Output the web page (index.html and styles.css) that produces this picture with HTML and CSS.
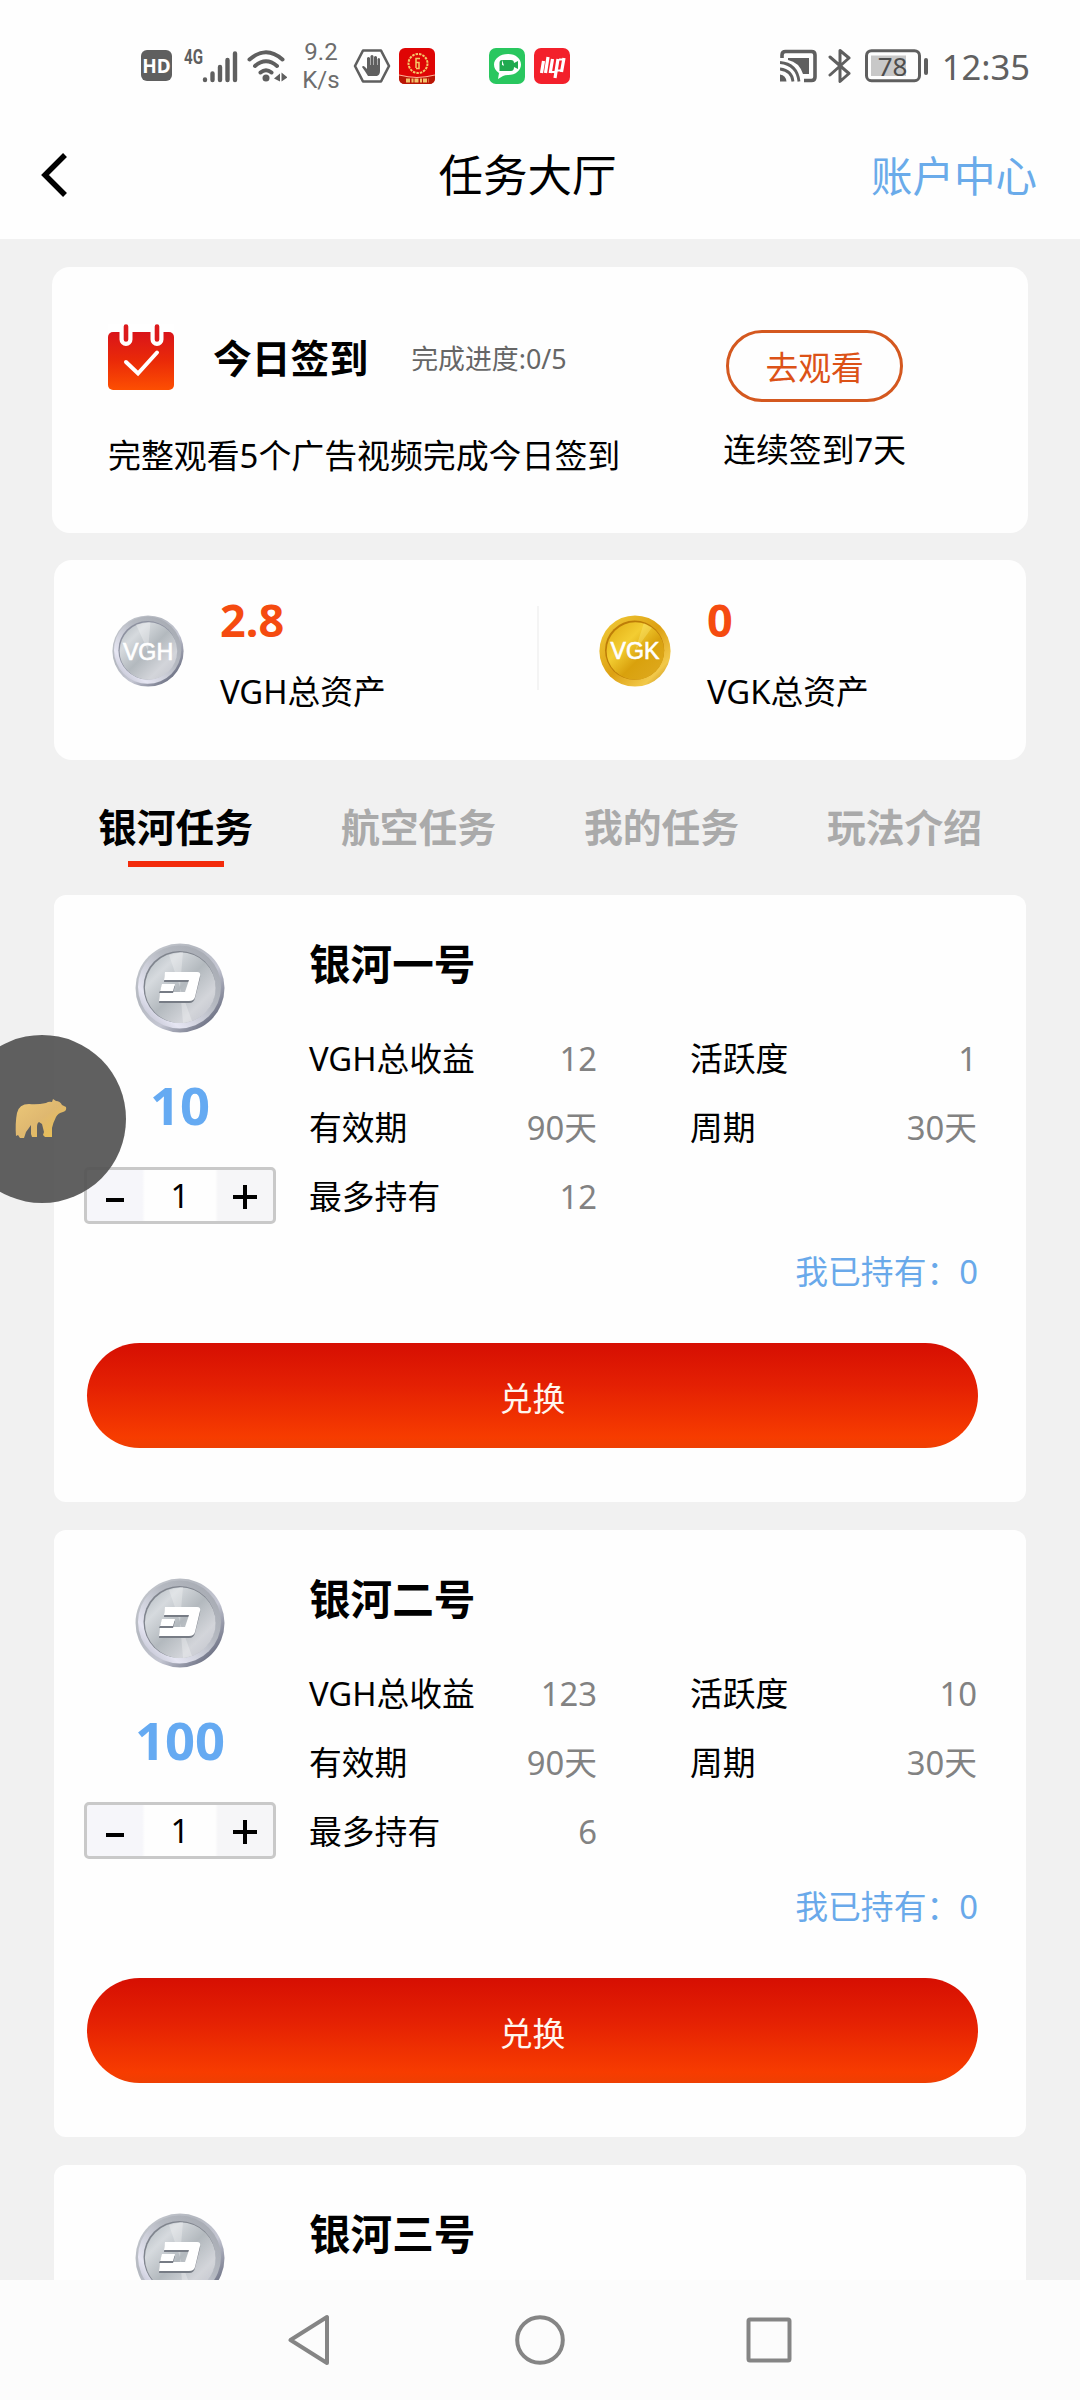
FILE: index.html
```html
<!DOCTYPE html>
<html lang="zh-CN">
<head>
<meta charset="utf-8">
<title>任务大厅</title>
<link rel="stylesheet" href="styles.css">
</head>
<body>
<svg class="defs" width="0" height="0">
  <defs>
    <linearGradient id="rim" x1="0" y1="0" x2="1" y2="1">
      <stop offset="0" stop-color="#c9ccd2"/><stop offset=".35" stop-color="#b4b8c0"/><stop offset=".6" stop-color="#c4c6d2"/><stop offset=".85" stop-color="#74788a"/><stop offset="1" stop-color="#9a9dae"/>
    </linearGradient>
    <linearGradient id="rimLight" x1="0" y1="1" x2="1" y2="0">
      <stop offset="0" stop-color="#a9abbb"/><stop offset=".25" stop-color="#e6e6f3"/><stop offset=".6" stop-color="#b5b9c1"/><stop offset="1" stop-color="#a2a6ae"/>
    </linearGradient>
    <linearGradient id="face" x1="0" y1="0" x2="1" y2="1">
      <stop offset="0" stop-color="#adb5bb"/><stop offset=".25" stop-color="#d6dade"/><stop offset=".5" stop-color="#b3b9be"/><stop offset=".75" stop-color="#d3d5da"/><stop offset="1" stop-color="#bfc1ca"/>
    </linearGradient>
    <linearGradient id="goldRim" x1="0" y1="0" x2="1" y2="1">
      <stop offset="0" stop-color="#f3cf3c"/><stop offset=".5" stop-color="#dda012"/><stop offset=".8" stop-color="#f2c94a"/><stop offset="1" stop-color="#b97a08"/>
    </linearGradient>
    <linearGradient id="goldFace" x1="0" y1="0" x2="1" y2="1">
      <stop offset="0" stop-color="#e0a910"/><stop offset=".35" stop-color="#f3cd32"/><stop offset=".6" stop-color="#d9a10d"/><stop offset="1" stop-color="#dfab22"/>
    </linearGradient>
    <linearGradient id="cal" x1="0" y1="0" x2="0" y2="1">
      <stop offset="0" stop-color="#d9141a"/><stop offset=".5" stop-color="#ea2a08"/><stop offset="1" stop-color="#fd4f02"/>
    </linearGradient>
    <linearGradient id="bear" x1="0" y1="0" x2="1" y2="1">
      <stop offset="0" stop-color="#ecc878"/><stop offset=".5" stop-color="#dfb870"/><stop offset="1" stop-color="#ecc24c"/>
    </linearGradient>
    <symbol id="coin" viewBox="0 0 90 90">
      <circle cx="45" cy="45" r="44.5" fill="url(#rim)"/>
      <circle cx="44.5" cy="44" r="41.5" fill="url(#rimLight)"/>
      <circle cx="44.5" cy="44" r="36" fill="#80858e"/>
      <circle cx="45.3" cy="44.7" r="35.4" fill="url(#face)"/>
      <path d="M45 44 34 12 48 9zM45 45 57 78 48 80z" fill="#fff" opacity=".28"/>
      <path d="M30 31h32q4 0 3 4l-5 20q-1 5-6 5H24l1-9h25l4-12H29z" fill="#777c85"/>
      <path d="M30 29h32q4 0 3 4l-5 21q-1 4-6 4H24l1-9h25l4-12H29z" fill="#fff"/>
      <path d="M27 43h13l-2 7H24z" fill="#777c85"/>
      <path d="M27 41h13l-2 7H25z" fill="#fff"/>
    </symbol>
  </defs>
</svg>
<div class="phone">
  <div class="status">
    <div class="status-left">
      <svg width="31" height="31" viewBox="0 0 31 31"><rect width="31" height="31" rx="6" fill="#5f5f5f"/><text x="15.500" y="22.500" text-anchor="middle" class="hd">HD</text></svg>
      <svg class="signal" width="56" height="52" viewBox="-1 -8 56 52"><text x="0" y="15.500" class="g4" textLength="19" lengthAdjust="spacingAndGlyphs">4G</text><g stroke="#5f5f5f" stroke-width="4.400" stroke-linecap="round"><path d="M21 31.500v.6M28.500 25.500v6.600M36 19v13.100M43.500 12v20.100M51 5.500v26.600"/></g></svg>
      <svg class="wifi" width="40" height="36" viewBox="0 0 40 36"><g fill="none" stroke="#5f5f5f" stroke-width="4" stroke-linecap="round"><path d="M2.500 11.500Q19 -3 35.500 11.500M8 18Q19 8.500 30 18M13.500 24.500Q19 20 24.500 24.500"/></g><circle cx="19" cy="30" r="3.500" fill="#5f5f5f"/><path d="M27 30.500l6-5v8zM34.500 24.500v9l6-4z" fill="#5f5f5f"/></svg>
      <div class="speed"><span>9.2</span><span>K/s</span></div>
      <svg class="hex" width="38" height="36" viewBox="0 0 38 36"><path d="M10 2.500h18L36 18l-8 15.500H10L2 18z" fill="none" stroke="#5f5f5f" stroke-width="2.600" stroke-linejoin="round"/><path d="M15 28q-3-5-6-9 1-2 3 0l2 2V10q1.500-2 3 0v7h.5V8q1.500-2 3 0v9h.5V9q1.500-2 3 0v8h.5v-6q1.500-2 2.500 0v12q0 4-3 5z" fill="#5f5f5f"/></svg>
      <svg class="app1" width="36" height="36" viewBox="0 0 36 36"><rect width="36" height="36" rx="6" fill="#df0505"/><circle cx="19" cy="15.500" r="9.500" fill="none" stroke="#f5c868" stroke-width="2" stroke-dasharray="2.500 1"/><path d="M21 10.500h-4v4h3v6h-3M17 14v6" fill="none" stroke="#f5c868" stroke-width="1.500"/><path d="M0 27q18 5 36 0v3q0 6-6 6H6q-6 0-6-6z" fill="#b91605"/><path d="M0 27q18 5 36 0" fill="none" stroke="#ffb49b" stroke-width="1.200"/><path d="M7 32.500h23" stroke="#f3c36c" stroke-width="4" stroke-dasharray="4 1.500 2 1"/></svg>
      <svg class="app2" width="36" height="36" viewBox="0 0 36 36"><rect width="36" height="36" rx="7" fill="#29c75f"/><path d="M19 6c8 0 13 5 13 10.500S27 27 19 27q-3 0-5 1l-5 3 1-6q-5-3-5-8.500C5 11 11 6 19 6z" fill="#fff"/><path d="M13 12h9q3 0 3 3l4-2v8l-4-2q0 4-3 4h-5M10.500 15q0-3 2.500-3v5q5 1 5 6h-7.500z" fill="#20aa50"/></svg>
      <svg class="app3" width="36" height="36" viewBox="0 0 36 36"><rect width="36" height="36" rx="7" fill="#f3202b"/><g fill="none" stroke="#fff" stroke-width="3.200"><path d="M9.500 13 7.500 25M14 9l-2.500 16M18.500 11l-2.300 14M24 11l-3 19M30 10l-2.500 14"/><path d="M15 24h6M25 11.500h5M23 22.500h5" stroke-width="2.200"/></g></svg>
    </div>
    <div class="status-right">
      <svg width="38" height="34" viewBox="0 0 38 34"><path d="M2 9V6q0-3.500 3.500-3.500h26Q35 2.500 35 6v22q0 3.500-3.500 3.500H24" fill="none" stroke="#5f5f5f" stroke-width="3.600"/><path d="M8 9h21v16h-6Q19 13 8 11z" fill="#5f5f5f"/><g fill="none" stroke="#5f5f5f" stroke-width="2.800"><path d="M0 13.500Q17 15 19 32.500M0 20Q12 21.500 13 32.500"/></g><path d="M0 25.500q6 1 6.500 7H0z" fill="#5f5f5f"/></svg>
      <svg class="bt" width="24" height="36" viewBox="0 0 24 36"><path d="M2 9 21 25.500 12 33.500V2.500L21 10 2 27" fill="none" stroke="#5f5f5f" stroke-width="3" stroke-linejoin="round" stroke-linecap="round"/></svg>
      <svg class="battery" width="64" height="34" viewBox="0 0 64 34"><rect x="1.500" y="1.700" width="53" height="30" rx="5" fill="none" stroke="#5f5f5f" stroke-width="3"/><rect x="6" y="6.500" width="35" height="20.500" fill="#c8c8c8"/><rect x="59" y="9" width="4" height="17" rx="2" fill="#5f5f5f"/><text x="27.500" y="26.500" text-anchor="middle" class="pct">78</text></svg>
      <span class="time">12:35</span>
    </div>
  </div>

  <header class="header">
    <svg class="back" width="30" height="46" viewBox="0 0 30 46"><path d="M25 3 5 23l20 20" fill="none" stroke="#000" stroke-width="5.500"/></svg>
    <h1>任务大厅</h1>
    <a class="account">账户中心</a>
  </header>

  <main class="page">
    <section class="card signin">
      <div class="signin-main">
        <div class="signin-head">
          <svg width="66" height="66" viewBox="0 0 66 66"><rect y="8" width="66" height="58" rx="5" fill="url(#cal)"/><g stroke="#fff" stroke-width="13" stroke-linecap="round"><path d="M18 5v10.500M49 5v10.500"/></g><path d="M0 0h66v8H0z" fill="#fff"/><g stroke="#dc1a1c" stroke-width="4.600" stroke-linecap="round"><path d="M18 2.500v13M49 2.500v13"/></g><path d="M18 38 30 49.500 49 28.500" fill="none" stroke="#fff" stroke-width="4" stroke-linecap="round"/></svg>
          <h2>今日签到</h2>
          <span class="progress">完成进度:0/5</span>
        </div>
        <p>完整观看5个广告视频完成今日签到</p>
      </div>
      <div class="signin-side">
        <button class="watch">去观看</button>
        <p>连续签到7天</p>
      </div>
    </section>

    <section class="card assets">
      <div class="asset">
        <svg width="72" height="72" viewBox="0 0 90 90"><circle cx="45" cy="45" r="44.500" fill="url(#rim)"/><circle cx="44.500" cy="44" r="42" fill="url(#rimLight)"/><circle cx="44.500" cy="44" r="36.500" fill="#8d91a0"/><circle cx="45.500" cy="45" r="36" fill="url(#face)"/><path d="M45 45 30 12 48 9z" fill="#fff" opacity=".3"/><text x="45" y="56" text-anchor="middle" class="coin-text">VGH</text></svg>
        <div><strong>2.8</strong><span>VGH总资产</span></div>
      </div>
      <div class="divider"></div>
      <div class="asset">
        <svg width="72" height="72" viewBox="0 0 90 90"><circle cx="45" cy="45" r="44.500" fill="url(#goldRim)"/><circle cx="44.500" cy="44" r="37" fill="#bd7d08"/><circle cx="45.500" cy="45" r="36" fill="url(#goldFace)"/><path d="M45 45 56 10 66 16z" fill="#fff28a" opacity=".3"/><text x="45" y="55" text-anchor="middle" class="coin-text">VGK</text></svg>
        <div><strong>0</strong><span>VGK总资产</span></div>
      </div>
    </section>

    <nav class="tabs">
      <a class="tab active">银河任务</a>
      <a class="tab">航空任务</a>
      <a class="tab">我的任务</a>
      <a class="tab">玩法介绍</a>
    </nav>

    <div class="tasks">
      <article class="card task">
        <div class="task-top">
          <div class="buy">
            <svg width="90" height="90"><use href="#coin"/></svg>
            <b class="price">10</b>
            <div class="stepper"><i class="minus"></i><span>1</span><i class="plus"></i></div>
          </div>
          <div class="info">
            <h3>银河一号</h3>
            <dl>
              <div><dt>VGH总收益</dt><dd>12</dd></div>
              <div><dt>活跃度</dt><dd>1</dd></div>
              <div><dt>有效期</dt><dd>90天</dd></div>
              <div><dt>周期</dt><dd>30天</dd></div>
              <div><dt>最多持有</dt><dd>12</dd></div>
            </dl>
          </div>
        </div>
        <p class="held">我已持有：0</p>
        <button class="exchange">兑换</button>
      </article>

      <article class="card task">
        <div class="task-top">
          <div class="buy">
            <svg width="90" height="90"><use href="#coin"/></svg>
            <b class="price">100</b>
            <div class="stepper"><i class="minus"></i><span>1</span><i class="plus"></i></div>
          </div>
          <div class="info">
            <h3>银河二号</h3>
            <dl>
              <div><dt>VGH总收益</dt><dd>123</dd></div>
              <div><dt>活跃度</dt><dd>10</dd></div>
              <div><dt>有效期</dt><dd>90天</dd></div>
              <div><dt>周期</dt><dd>30天</dd></div>
              <div><dt>最多持有</dt><dd>6</dd></div>
            </dl>
          </div>
        </div>
        <p class="held">我已持有：0</p>
        <button class="exchange">兑换</button>
      </article>

      <article class="card task">
        <div class="task-top">
          <div class="buy">
            <svg width="90" height="90"><use href="#coin"/></svg>
          </div>
          <div class="info">
            <h3>银河三号</h3>
          </div>
        </div>
      </article>
    </div>
  </main>

  <div class="navbar">
    <svg width="46" height="52" viewBox="0 0 46 52"><path d="M39 3v46L2.500 26z" fill="none" stroke="#858585" stroke-width="4" stroke-linejoin="round"/></svg>
    <svg width="52" height="52" viewBox="0 0 52 52"><circle cx="26" cy="26" r="22.800" fill="none" stroke="#858585" stroke-width="4"/></svg>
    <svg width="46" height="52" viewBox="0 0 46 52"><rect x="2.500" y="5.500" width="41" height="41" rx="1.500" fill="none" stroke="#858585" stroke-width="4"/></svg>
  </div>

  <div class="float">
    <svg width="52" height="40" viewBox="0 0 52 40"><path d="M1 37Q0 24 2 14 4 5 14 5q8 1 17-1 3-2 6-1l1-3 3 2q4 0 6 4l4 2q1 4-3 5-5 1-7 5-3 6-4 11v9h-7l-2-2 1-3-2-8-3-2q-2 1-2 5v10h-5l-1-3v-9q-2 3-5 7l-2 6H5l-2-3z" fill="url(#bear)"/></svg>
  </div>
</div>
</body>
</html>
```
FILE: styles.css
```css
* { box-sizing: border-box; margin: 0; padding: 0; }

body {
  width: 1080px;
  height: 2400px;
  overflow: hidden;
  background: #f1f1f1;
  color: #000;
  font-family: "Noto Sans", "Noto Sans CJK SC", sans-serif;
  font-size: 32.8px;
}

.defs { position: absolute; }

.phone {
  position: relative;
  display: flex;
  flex-direction: column;
  height: 2400px;
  overflow: hidden;
}

button {
  border: 0;
  background: none;
  font: inherit;
}

/* system status bar */
.status {
  display: flex;
  justify-content: space-between;
  height: 130px;
  padding: 0 50px 0 141px;
  background: #fefefe;
}
.status-left, .status-right { display: flex; align-items: center; height: 131px; }
.hd { font: bold 19px "Noto Sans", sans-serif; fill: #fff; }
.g4 { font: bold 20px "Roboto", sans-serif; fill: #5f5f5f; }
.signal { margin-left: 11px; }
.wifi { margin-left: 8px; }
.speed {
  display: flex;
  flex-direction: column;
  width: 46px;
  margin-left: 11px;
  text-align: center;
  font: 24px/28px "Roboto", sans-serif;
  color: #6d6d6d;
}
.hex { margin-left: 9px; }
.app1 { margin-left: 8px; }
.app2 { margin-left: 54px; }
.app3 { margin-left: 9px; }
.bt { margin-left: 10px; }
.battery { margin-left: 13px; }
.pct { font: 26px "Noto Sans", sans-serif; fill: #4d4d4d; }
.time {
  margin-left: 13px;
  font-size: 34.5px;
  line-height: 40px;
  color: #606060;
  padding-top: 3px;
}

/* page header */
.header {
  display: grid;
  grid-template-columns: 178px 1fr 200px;
  align-items: center;
  height: 109px;
  padding: 0 43px 20px 40px;
  background: #fefefe;
}
.header h1 {
  font-size: 44.5px;
  font-weight: 400;
  line-height: 60px;
  text-align: center;
}
.account {
  font-size: 41.5px;
  line-height: 60px;
  text-align: right;
  color: #6aabea;
  padding-top: 3px;
}

.page {
  flex: 1;
  min-height: 0;
  overflow: hidden;
  padding: 28px 54px 0;
}
.card {
  background: #fefefe;
  border-radius: 18px;
}

/* daily check-in */
.signin {
  display: flex;
  justify-content: space-between;
  height: 266px;
  margin: 0 -2px;
  padding: 57px 122px 0 56px;
}
.signin-head {
  display: flex;
  align-items: center;
  height: 66px;
}
.signin-head h2 {
  margin-left: 39px;
  font-size: 38.8px;
  line-height: 50px;
  padding-top: 2px;
}
.progress {
  margin-left: 43px;
  font-size: 26.9px;
  color: #666;
}
.signin-main p {
  margin-top: 42px;
  line-height: 48px;
  font-size: 32.9px;
}
.signin-side {
  display: flex;
  flex-direction: column;
  align-items: center;
  padding-top: 6px;
}
.watch {
  width: 177px;
  height: 72px;
  border: 3px solid #d4581f;
  border-radius: 36px;
  color: #dc5217;
  line-height: 66px;
  padding-top: 2px;
}
.signin-side p {
  margin-top: 24px;
  line-height: 48px;
}

/* asset totals */
.assets {
  display: flex;
  height: 200px;
  margin-top: 27px;
}
.asset {
  display: flex;
  width: 486px;
  padding: 30px 0 0 58px;
}
.asset + .divider + .asset { padding-left: 59px; }
.asset svg { margin-top: 25px; }
.asset div {
  display: flex;
  flex-direction: column;
  margin-left: 36px;
}
.asset strong {
  font-size: 45px;
  line-height: 60px;
  color: #f54b10;
}
.asset span {
  margin-top: 18px;
  line-height: 48px;
}
.divider {
  width: 2px;
  height: 84px;
  margin: 46px 1px 0 -3px;
  background: #f4f4f4;
}
.coin-text {
  font: 29px "Liberation Sans", sans-serif;
  fill: #fff;
  stroke: #fff;
  stroke-width: .8px;
}

/* task categories */
.tabs {
  display: grid;
  grid-template-columns: repeat(4, 1fr);
  height: 135px;
}
.tab {
  display: flex;
  flex-direction: column;
  align-items: center;
  padding-top: 42px;
  font-size: 38.8px;
  font-weight: 700;
  line-height: 50px;
  color: #aaa;
}
.tab.active { color: #000; }
.tab.active::after {
  content: "";
  width: 96px;
  height: 6px;
  margin-top: 9px;
  background: #f32b0b;
}

/* task cards */
.tasks {
  display: flex;
  flex-direction: column;
  gap: 28px;
}
.task {
  height: 607px;
  padding: 0 48px 0 31px;
  border-radius: 12px;
}
.task-top { display: flex; }
.buy {
  display: flex;
  flex-direction: column;
  align-items: center;
  width: 190px;
  padding-top: 48px;
}
.price {
  margin-top: 37px;
  font-size: 52.5px;
  line-height: 70px;
  color: #65aaf2;
}
.stepper {
  display: grid;
  grid-template-columns: 55px 1fr 55px;
  align-items: center;
  width: 192px;
  height: 57px;
  margin-top: 27px;
  border: 3px solid #c9c9c9;
  border-radius: 5px;
  background: linear-gradient(90deg, #f6f6fa 55px, #fefefe 58px, #fefefe 128px, #f6f6f8 131px);
  text-align: center;
  line-height: 50px;
}
.stepper i { justify-self: center; background: #000; }
.minus { width: 18px; height: 4px; margin: 9px 0 0 1px; }
.stepper .plus {
  width: 24px;
  height: 24px;
  margin-top: 2px;
  margin-right: 2px;
  background: linear-gradient(#000, #000) center / 24px 4px no-repeat, linear-gradient(#000, #000) center / 4px 24px no-repeat;
}
.info {
  flex: 1;
  margin-left: 34px;
  padding-top: 43px;
}
.info h3 {
  font-size: 41.6px;
  line-height: 52px;
}
.info dl {
  display: grid;
  grid-template-columns: 288px 287px;
  column-gap: 93px;
  margin-top: 34px;
}
.info dl div {
  display: flex;
  justify-content: space-between;
  height: 69px;
  line-height: 69px;
}
.info dd { color: #828282; }
.held {
  margin-top: 16px;
  text-align: right;
  line-height: 50px;
  color: #69a9ea;
}
.exchange {
  display: block;
  width: 891px;
  height: 105px;
  margin: 46px 0 0 2px;
  padding-top: 2px;
  border-radius: 53px;
  background: linear-gradient(#d60f02, #e42003 40%, #f73c00 90%, #ee3f03);
  color: #fff6ee;
}

/* system navigation */
.navbar {
  display: flex;
  align-items: center;
  justify-content: center;
  gap: 180px;
  height: 120px;
  background: #fcfcfc;
}

.float {
  position: absolute;
  left: -42px;
  top: 1035px;
  display: flex;
  align-items: center;
  width: 168px;
  height: 168px;
  padding-left: 57px;
  border-radius: 50%;
  background: rgba(84, 84, 84, .93);
}
```
